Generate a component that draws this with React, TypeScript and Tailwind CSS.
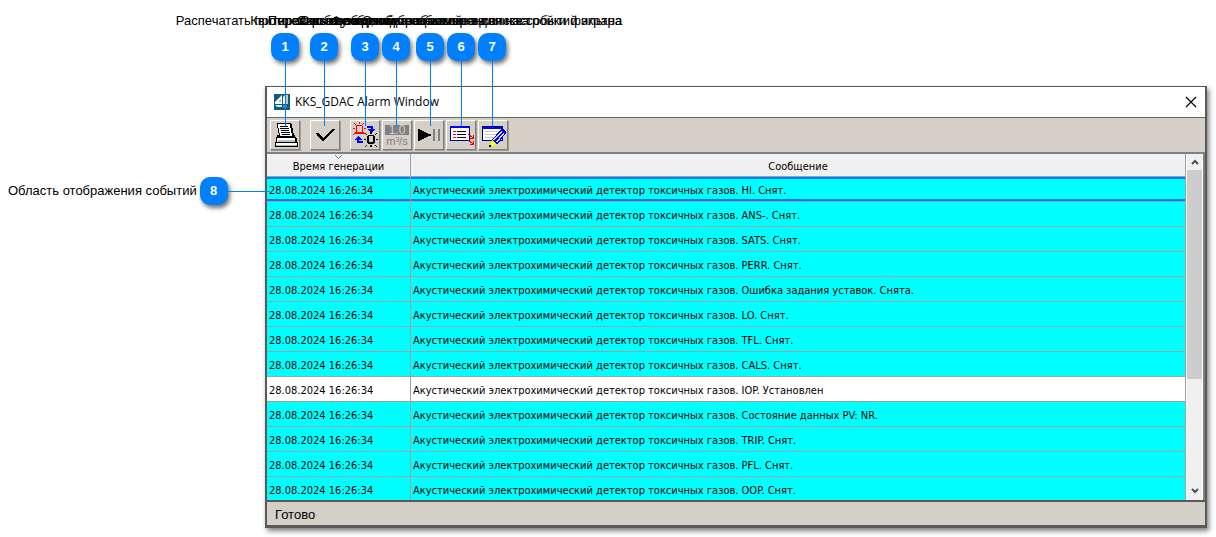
import type { ReactNode } from 'react'

const DEVICE = 'Акустический электрохимический детектор токсичных газов. '
const TIME = '28.08.2024 16:26:34'

const events = [
  { text: 'HI. Снят.' },
  { text: 'ANS-. Снят.' },
  { text: 'SATS. Снят.' },
  { text: 'PERR. Снят.' },
  { text: 'Ошибка задания уставок. Снята.' },
  { text: 'LO. Снят.' },
  { text: 'TFL. Снят.' },
  { text: 'CALS. Снят.' },
  { text: 'IOP. Установлен', active: true },
  { text: 'Состояние данных PV: NR.' },
  { text: 'TRIP. Снят.' },
  { text: 'PFL. Снят.' },
  { text: 'OOP. Снят.' },
]

// Callouts over the toolbar, anchored to the button they describe
const callouts = [
  { n: 1, pos: 'left-[271px]', text: 'Распечатать протокол всех событий' },
  { n: 2, pos: 'left-[310px]', text: 'Квитировать сообщение' },
  { n: 3, pos: 'left-[351px]', text: 'Переключение режима событий' },
  { n: 4, pos: 'left-[382px]', text: 'Скрытие всех единиц измерения' },
  { n: 5, pos: 'left-[416px]', text: 'Функция автообновления списка' },
  { n: 6, pos: 'left-[447px]', text: 'Сообщения, отображаемые в списке событий экрана' },
  { n: 7, pos: 'left-[478px]', text: 'Отображение окна для настройки фильтра' },
]

function Badge({ n }: { n: number }) {
  return (
    <span className="flex h-7 w-7 shrink-0 items-center justify-center rounded-[10px] bg-[#0080ff] text-[13px] font-bold text-white shadow-[2px_3px_4px_rgba(0,0,0,0.55)]">
      {n}
    </span>
  )
}

function ToolButton({ label, children }: { label: string; children: ReactNode }) {
  return (
    <button
      type="button"
      aria-label={label}
      className="flex h-[30px] w-[30px] items-center justify-center border border-t-white border-l-white border-r-[#808080] border-b-[#808080] bg-[#d4d0c8] shadow-[1px_1px_0_#a09c94]"
    >
      {children}
    </button>
  )
}

function Icon({ children }: { children: ReactNode }) {
  return (
    <svg width="28" height="28" viewBox="0 0 28 28" fill="none" shapeRendering="crispEdges" className="shrink-0" aria-hidden="true">
      {children}
    </svg>
  )
}

function PrinterIcon() {
  return (
    <Icon>
      <path d="M6 2h14v1h1v4h1v5h1v4H8v-4H7V7H6z" fill="#000" />
      <path d="M7 3h12v4h1v5h1v3H9v-3H8V7H7z" fill="#fff" />
      <path d="M9 5h8v1H9zM9 7h9v1H9zM10 9h8v1h-8zM10 11h9v1h-9zM11 13h8v1h-8z" fill="#000" />
      <path d="M6 14h2v2h15v-2h1v2h1v1h1v4h1v5H4v-5h1v-5h1z" fill="#000" />
      <path d="M6 17h18v4H6zM5 22h21v3H5z" fill="#fff" />
      <path d="M7 19h17v2H7z" fill="#c0c0c0" />
      <path d="M21 19h2v1h-2z" fill="#e0e000" />
      <path d="M5 24h21v1H5z" fill="#b0b0b0" />
    </Icon>
  )
}

function CheckIcon() {
  return (
    <Icon>
      <path d="M5 12h3l4 5 9-9h3v1L12 20h-1l-3-3z" fill="#000" />
    </Icon>
  )
}

function SwapIcon() {
  return (
    <Icon>
      <path d="M5 4h6v1h1v6h1v2H4v-2h1zM6 5v6h5V5z" fill="#f00" fillRule="evenodd" />
      <path d="M3 2h1v1h1v1H4V3H3zM2 7h2v1H2zM2 13h1v-1h1v1H3v1H2zM13 2h-1v1h-1v1h1V3h1zM13 7h2v1h-2zM14 13h-1v-1h1zM8 1h1v2H8z" fill="#f00" />
      <path d="M16 5h6v3h2v1h-1v1h-1v1h-1v1h-1v-1h-1v-1h-1V9h-1V8h3V7h-4z" fill="#00f" />
      <path d="M12 22H6v-3H4v-1h1v-1h1v-1h1v-1h1v1h1v1h1v1h1v1H8v1h4z" fill="#00f" />
      <path d="M17 14h6v1h1v7h-1v1h-6v-1h-1v-7h1zM18 15v6h4v-6z" fill="#000" fillRule="evenodd" />
      <path d="M14 12h1v1h1v1h-1v-1h-1zM13 18h2v1h-2zM14 25h1v-1h1v1h-1v1h-1zM26 12h-1v1h-1v1h1v-1h1zM25 18h2v1h-2zM26 25h-1v-1h-1v1h1v1h1zM19 11h2v2h-2zM19 24h2v2h-2z" fill="#000" />
    </Icon>
  )
}

function UnitsIcon() {
  return (
    <svg width="28" height="28" viewBox="0 0 28 28" aria-hidden="true" className="shrink-0 text-[12px]">
      <path d="M2 4h24v10H2z" fill="#808080" />
      <text x="14" y="13" textAnchor="middle" fill="#d4d0c8">1.0</text>
      <text x="14" y="24" textAnchor="middle" fill="#808080" className="text-[11px]">m³/s</text>
    </svg>
  )
}

function PlayPauseIcon() {
  return (
    <Icon>
      <path d="M3 8h2v1h2v1h2v1h2v1h2v1h3v2h-3v1h-2v1H9v1H7v1H5v1H3z" fill="#000" />
      <path d="M18 8h2v12h-2zM23 8h2v12h-2z" fill="#808080" />
    </Icon>
  )
}

function ListIcon() {
  return (
    <Icon>
      <path d="M3 5h20v15H3z" fill="#000080" />
      <path d="M4 7h18v12H4z" fill="#fff" />
      <path d="M3 5h20v2H3z" fill="#00f" />
      <path d="M6 10h3v1H6zM6 13h3v1H6zM6 16h3v1H6z" fill="#f00" />
      <path d="M10 10h9v1h-9zM10 13h9v1h-9zM10 16h9v1h-9z" fill="#000" />
      <path d="M21 13l5 4M21 19l5 4" stroke="#f00" />
      <path d="M26 14h1v4h-4v-1h3zM26 20h1v4h-4v-1h3z" fill="#f00" />
    </Icon>
  )
}

function EditIcon() {
  return (
    <Icon>
      <path d="M3 5h21v15H3z" fill="#000080" />
      <path d="M4 6h19v13H4z" fill="#fff" />
      <path d="M4 6h19v2H4z" fill="#00f" />
      <path d="M6 10h13v1H6zM6 13h11v1H6zM6 16h8v1H6z" fill="#c8c8c8" />
      <path d="M22 8h2l3 2v2l-9 12-5-3v-2z" fill="#00f" />
      <path d="M22 10l1 1-8 9-1-1zM24 12l1 1-7 9-1-1z" fill="#d8e4ff" />
      <path d="M13 19l5 4-1 1-5 1-1-1z" fill="#ff0" />
      <path d="M10 24h2v2h-2z" fill="#000" />
    </Icon>
  )
}

function Logo() {
  return (
    <svg width="16" height="16" viewBox="0 0 16 16" aria-hidden="true">
      <path d="M0 0h16v16H0z" fill="#125a80" />
      <path d="M8 1v9H1V8z" fill="#fff" />
      <path d="M7 5v3H4z" fill="#8fb5c8" />
      <path d="M9 3l2-2v9H9z" fill="#fff" />
      <path d="M12 1h2v9h-2z" fill="#b4cedb" />
      <path d="M1 11h7v2H3z" fill="#d8e6ee" />
      <path d="M9 11h4v3H9z" fill="#4a89a8" />
    </svg>
  )
}

function AlarmWindow() {
  return (
    <main className="border border-[#5a5a5a] border-r-2 border-b-[3px] border-l-2 bg-[#d4d0c8] shadow-[2px_3px_5px_rgba(0,0,0,0.5)]">
      <header className="flex h-[31px] items-center justify-between border-b border-[#696969] bg-white pr-1.5 pl-[7px]">
        <div className="flex items-center gap-[5px]">
          <Logo />
          <h1 className="font-['Open_Sans','Noto_Sans',sans-serif] text-[12px]">KKS_GDAC Alarm Window</h1>
        </div>
        <button type="button" aria-label="Закрыть" className="flex h-4 w-4 items-center justify-center">
          <svg width="12" height="12" viewBox="0 0 12 12" stroke="#000" strokeWidth="1.2" aria-hidden="true">
            <path d="M1 1l10 10M11 1L1 11" />
          </svg>
        </button>
      </header>

      <div className="flex h-[36px] items-center gap-2.5 border-b-2 border-[#808080] pl-[3px]">
        <ToolButton label="Печать"><PrinterIcon /></ToolButton>
        <ToolButton label="Квитировать"><CheckIcon /></ToolButton>
        <div className="flex gap-0.5">
          <ToolButton label="Переключить"><SwapIcon /></ToolButton>
          <ToolButton label="Единицы измерения"><UnitsIcon /></ToolButton>
          <ToolButton label="Старт/пауза"><PlayPauseIcon /></ToolButton>
          <ToolButton label="Список"><ListIcon /></ToolButton>
          <ToolButton label="Настройка фильтра"><EditIcon /></ToolButton>
        </div>
      </div>

      {/* Event list */}
      <div className="flex max-h-[346px] overflow-hidden border-r-2 border-[#808080] font-['DejaVu_Sans_Condensed','DejaVu_Sans',sans-serif] text-[11px]">
        <table className="w-full flex-1 table-fixed border-separate border-spacing-0">
          <thead>
            <tr className="h-[23px] bg-[#f0f0f0]">
              <th className="relative w-[144px] border-r border-b border-[#a0a0a0] p-0 pt-1 font-normal">
                <svg className="absolute top-px left-[67px]" width="9" height="5" viewBox="0 0 9 5" fill="none" stroke="#808080" aria-hidden="true">
                  <path d="M1 0l3.500 3.500L8 0" />
                </svg>
                Время генерации
              </th>
              <th className="border-r border-b border-[#a0a0a0] p-0 pt-1 font-normal">Сообщение</th>
            </tr>
          </thead>
          <tbody>
            {events.map((e, i) => (
              <tr key={e.text} className={e.active ? 'h-[25px] bg-white' : 'h-[25px] bg-[#00ffff]'}>
                <td className={`border-r border-b border-[#a0a0a0] pt-1 pr-0 pb-0 pl-0.5 ${i === 0 ? 'shadow-[inset_0_2px_#0080ff,inset_0_-2px_#0080ff]' : ''}`}>
                  {TIME}
                </td>
                <td className={`truncate border-r border-b border-[#a0a0a0] pt-1 pr-0 pb-0 pl-0.5 ${i === 0 ? 'shadow-[inset_0_2px_#0080ff,inset_0_-2px_#0080ff]' : ''}`}>
                  {DEVICE + e.text}
                </td>
              </tr>
            ))}
          </tbody>
        </table>
        <div className="flex w-[17px] shrink-0 flex-col border-x border-white bg-[#f0f0f0]">
          <button type="button" aria-label="Вверх" className="flex h-4 items-center justify-center">
            <svg width="8" height="6" viewBox="0 0 8 6" fill="none" stroke="#505050" strokeWidth="2" aria-hidden="true">
              <path d="M1 5l3-3 3 3" />
            </svg>
          </button>
          <div className="h-[209px] bg-[#cdcdcd]" />
          <button type="button" aria-label="Вниз" className="mt-[104px] flex h-4 items-center justify-center">
            <svg width="8" height="6" viewBox="0 0 8 6" fill="none" stroke="#505050" strokeWidth="2" aria-hidden="true">
              <path d="M1 1l3 3 3-3" />
            </svg>
          </button>
        </div>
      </div>

      <footer className="flex h-[25px] items-center border-t-2 border-[#5a5a5a] pt-0.5 pl-2 text-[13px]">
        Готово
      </footer>
    </main>
  )
}

export default function App() {
  return (
    <div className="relative overflow-hidden bg-white pt-[86px] pr-[9px] pb-[9px] pl-[265px] font-['Liberation_Sans',Arial,sans-serif] text-black">
      <AlarmWindow />

      {callouts.map((c) => (
        <div key={c.n} className={`absolute top-[13px] flex w-7 flex-col items-center ${c.pos}`}>
          <span className="mb-1 text-[13px] leading-4 whitespace-nowrap">{c.text}</span>
          <Badge n={c.n} />
          <span className="h-[65px] w-px bg-[#0080ff]" />
        </div>
      ))}

      <div className="absolute top-[177px] left-2 flex items-center">
        <span className="mr-[3px] text-[13px] whitespace-nowrap">Область отображения событий</span>
        <Badge n={8} />
        <span className="h-px w-[42px] bg-[#0080ff]" />
      </div>
    </div>
  )
}
